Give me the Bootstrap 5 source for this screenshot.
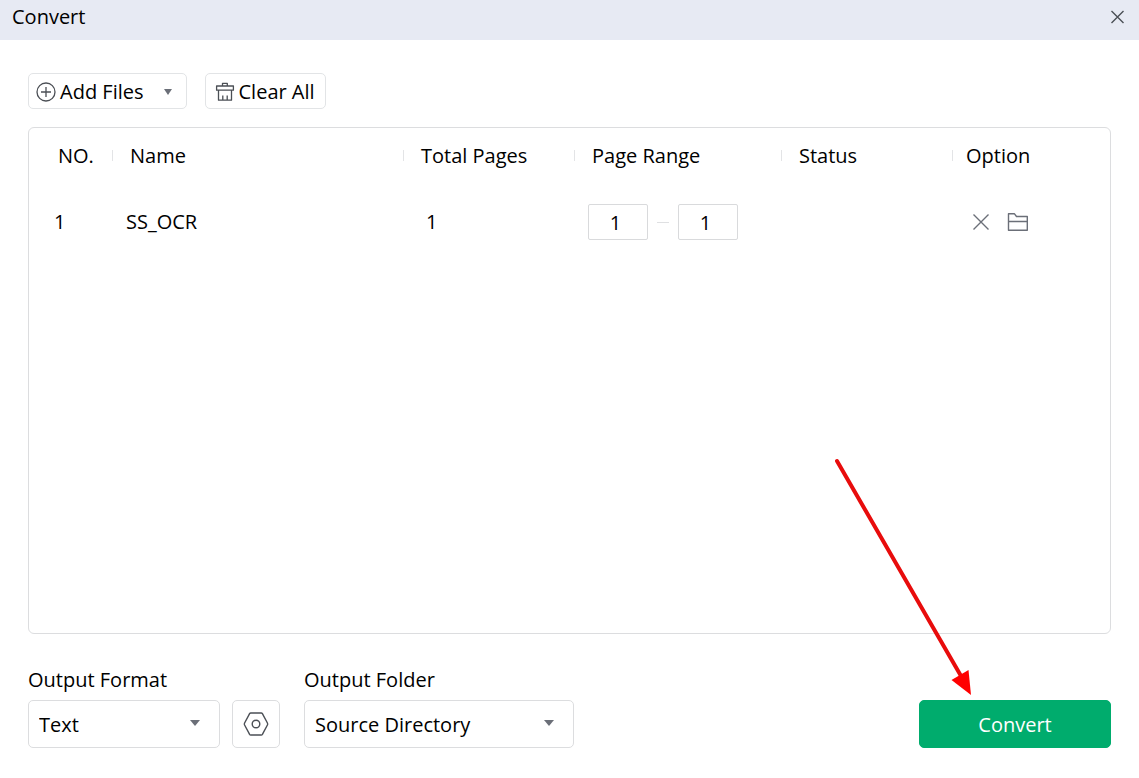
<!DOCTYPE html>
<html lang="en">
<head>
<meta charset="utf-8">
<meta name="viewport" content="width=device-width, initial-scale=1">
<title>Convert</title>
<link href="https://cdn.jsdelivr.net/npm/bootstrap@5.3.0/dist/css/bootstrap.min.css" rel="stylesheet">
<style>
  body { font-family: "Open Sans", "Noto Sans", sans-serif; font-size: 20px; line-height: 28px; color: #000; background: #fff; }
  .titlebar { background: #e7eaf3; height: 40px; padding: 0 12px; }
  .titlebar h1 { font-size: 20px; line-height: 34px; font-weight: 400; }
  .icon-btn { color: #6b6f78; background: none; border: 0; padding: 0; display: inline-flex; }
  .close-btn { height: 34px; align-items: center; color: #4b4f55; }
  .workspace { padding: 33px 28px 30px; }
  .toolbar { gap: 18px; }
  .tool-btn { --bs-btn-font-size: 20px; --bs-btn-line-height: 28px;
    --bs-btn-color: #000; --bs-btn-border-color: #e2e4e6; --bs-btn-border-radius: 5px; --bs-btn-bg: #fff; --bs-btn-hover-border-color: #c8cacc;
    height: 36px; padding: 4px 10px 2px 9px; }
  .tool-btn.add-btn { padding-left: 7px; padding-right: 13px; }
  .add-btn .caret { margin-left: 19px; }
  .tool-btn svg, .gear-btn svg { color: #4b4f55; }
  .file-panel { border: 1px solid #dcdddf; border-radius: 6px; margin: 18px 0 32px; }
  .file-table { table-layout: fixed; --bs-table-bg: transparent; color: #000; }
  .file-table th, .file-table td { border: 0; font-weight: 400; vertical-align: middle; }
  .file-table th { height: 56px; padding: 0 0 0 17px; background: linear-gradient(#e3e4e6, #e3e4e6) right 22px / 1px 11px no-repeat; }
  .file-table th:first-child { padding-left: 29px; }
  .file-table th:last-child { background: none; padding-left: 13px; }
  .file-table td { height: 76px; padding: 0 0 0 13px; }
  .file-table td:first-child { padding-left: 25px; }
  .file-table td.total { padding-left: 22px; }
  .file-table td.options { padding-left: 19px; }
  .page-input { width: 60px; height: 36px; padding: 0 5px 0 0; font-size: 20px; text-align: center; border-color: #d9dadc; border-radius: 2px; color: #000; }
  .range-dash { width: 12px; height: 1px; margin: 0 9px; background: #dfe0e2; }
  .folder-btn { margin-left: 17px; }
  .field-label { margin-bottom: 6px; }
  .drop { height: 48px; padding: 2px 40px 0 10px; font-size: 20px; line-height: 28px; color: #000; border-color: #dcdddf; border-radius: 5px;
    background-image: url("data:image/svg+xml,%3csvg xmlns='http://www.w3.org/2000/svg' viewBox='0 0 10 6'%3e%3cpath fill='%236b6f78' d='M0 0h10L5 6z'/%3e%3c/svg%3e");
    background-size: 10px 6px; background-position: right 19px top 19px; }
  .drop-format { width: 192px; }
  .drop-folder { width: 270px; }
  .gear-btn { width: 48px; height: 48px; padding: 0; margin-left: 12px; --bs-btn-border-color: #dcdddf; --bs-btn-border-radius: 5px; }
  .go-btn { width: 192px; height: 48px; padding: 8px 0 6px; --bs-btn-font-size: 20px; --bs-btn-bg: #00ac6d; --bs-btn-border-color: #00ac6d; --bs-btn-color: #fff; --bs-btn-border-radius: 5px;
    --bs-btn-hover-bg: #009b62; --bs-btn-hover-border-color: #009b62; --bs-btn-hover-color: #fff; }
  .pointer-arrow { position: absolute; right: 135px; bottom: 100%; pointer-events: none; }
</style>
</head>
<body class="d-flex flex-column min-vh-100">
<header class="titlebar d-flex justify-content-between">
  <h1 class="m-0">Convert</h1>
  <button type="button" class="icon-btn close-btn" aria-label="Close">
    <svg width="20" height="14" viewBox="0 0 20 14" fill="none" stroke="currentColor" stroke-width="1.4"><path d="M4.500 1l12 12M16.500 1L4.500 13"/></svg>
  </button>
</header>
<main class="workspace d-flex flex-column flex-grow-1">
  <div class="toolbar d-flex">
    <button type="button" class="btn tool-btn add-btn d-flex align-items-center">
      <svg class="me-1" width="20" height="20" viewBox="0 0 20 20" fill="none" stroke="currentColor" stroke-width="1.3"><circle cx="10" cy="10" r="9"/><path d="M10 5v10M5 10h10"/></svg>
      <span>Add Files</span>
      <svg class="caret" width="10" height="6" viewBox="0 0 10 6"><path fill="#6b6f78" d="M1 0h8L5 6z"/></svg>
    </button>
    <button type="button" class="btn tool-btn d-flex align-items-center">
      <svg class="me-1" width="20" height="20" viewBox="0 0 20 20" fill="none" stroke="currentColor" stroke-width="1.3" stroke-linejoin="round"><path d="M7.500 4V1.300h4.800V4M1.600 8.200V4h16.800v4.200zM3.500 8.200V18.200h13V8.200M7.800 18V13.500M12.200 18V13.500"/></svg>
      <span>Clear All</span>
    </button>
  </div>

  <section class="file-panel flex-grow-1">
    <table class="table file-table mb-0">
      <colgroup><col style="width:84px"><col><col style="width:171px"><col style="width:207px"><col style="width:171px"><col style="width:157px"></colgroup>
      <thead>
        <tr><th scope="col">NO.</th><th scope="col">Name</th><th scope="col">Total Pages</th><th scope="col">Page Range</th><th scope="col">Status</th><th scope="col">Option</th></tr>
      </thead>
      <tbody>
        <tr>
          <td>1</td>
          <td>SS_OCR</td>
          <td class="total">1</td>
          <td>
            <div class="d-flex align-items-center">
              <input class="form-control page-input" type="text" value="1" aria-label="First page">
              <span class="range-dash flex-shrink-0"></span>
              <input class="form-control page-input" type="text" value="1" aria-label="Last page">
            </div>
          </td>
          <td></td>
          <td class="options">
            <div class="d-flex align-items-center">
              <button type="button" class="icon-btn" aria-label="Remove file"><svg width="18" height="18" viewBox="0 0 18 18" fill="none" stroke="currentColor" stroke-width="1.4"><path d="M1.500 1.500l15 15M16.500 1.500l-15 15"/></svg></button>
              <button type="button" class="icon-btn folder-btn" aria-label="Open folder"><svg width="22" height="20" viewBox="0 0 22 20" fill="none" stroke="currentColor" stroke-width="1.4" stroke-linejoin="round"><path d="M1.500 18.200V1.800H7.500L9.500 4.500h10.800v13.700zM1.500 9.500H20"/></svg></button>
            </div>
          </td>
        </tr>
      </tbody>
    </table>
  </section>

  <footer class="d-flex align-items-end">
    <div>
      <label class="field-label d-block" for="format">Output Format</label>
      <select class="form-select drop drop-format" id="format"><option>Text</option></select>
    </div>
    <button type="button" class="btn gear-btn d-flex align-items-center justify-content-center" aria-label="Format settings">
      <svg width="26" height="24" viewBox="0 0 26 24" fill="none" stroke="currentColor" stroke-width="1.4" stroke-linejoin="round"><path d="M7.800 1h10.400q.8 0 1.200.7l5 9.300q.5 1 0 2l-5 9.300q-.4.700-1.200.700H7.800q-.8 0-1.200-.7L1.600 13q-.5-1 0-2l5-9.300Q7 1 7.800 1z"/><circle cx="13" cy="12" r="3.800"/></svg>
    </button>
    <div class="ms-4">
      <label class="field-label d-block" for="folder">Output Folder</label>
      <select class="form-select drop drop-folder" id="folder"><option>Source Directory</option></select>
    </div>
    <div class="position-relative ms-auto">
      <button type="button" class="btn go-btn">Convert</button>
      <svg class="pointer-arrow" width="144" height="244" viewBox="0 0 144 244" aria-hidden="true"><path d="M5 5L129 220" stroke="#e80c0c" stroke-width="4" stroke-linecap="round"/><path fill="#f00" d="M139 239l-19.500-15L136.500 214z"/></svg>
    </div>
  </footer>
</main>
<script src="https://cdn.jsdelivr.net/npm/bootstrap@5.3.0/dist/js/bootstrap.bundle.min.js"></script>
</body>
</html>
